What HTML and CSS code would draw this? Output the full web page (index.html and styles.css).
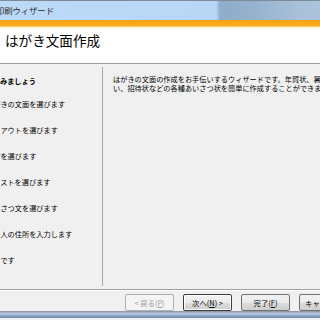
FILE: index.html
```html
<!DOCTYPE html>
<html lang="ja">
<head>
<meta charset="UTF-8">
<title>印刷ウィザード</title>
<link rel="stylesheet" href="styles.css">
</head>
<body>
<div class="window">
  <div class="titlebar"><span class="caption">印刷ウィザード</span></div>
  <div class="accent"></div>
  <div class="header"><h1>はがき文面作成</h1></div>

  <div class="content">
    <div class="steps">
      <div class="steps-title">はがきを作ってみましょう</div>
      <div class="step">はがきの文面を選びます</div>
      <div class="step">レイアウトを選びます</div>
      <div class="step">文字を選びます</div>
      <div class="step">イラストを選びます</div>
      <div class="step">あいさつ文を選びます</div>
      <div class="step">差出人の住所を入力します</div>
      <div class="step">完了です</div>
    </div>
    <div class="pane">
      <p class="intro">はがきの文面の作成をお手伝いするウィザードです。年賀状、暑中見舞<br>い、招待状などの各種あいさつ状を簡単に作成することができます。</p>
    </div>
  </div>

  <div class="footer">
    <button class="btn" disabled>&lt; 戻る(<u>P</u>)</button>
    <button class="btn default">次へ(<u>N</u>) &gt;</button>
    <button class="btn">完了(<u>F</u>)</button>
    <button class="btn">キャンセル</button>
  </div>
  <div class="frame-bottom"></div>
</div>
</body>
</html>
```

FILE: styles.css
```css
*{box-sizing:border-box; margin:0; padding:0;}
html,body{ width:320px; height:320px; overflow:hidden; background:#f0f0f0;}
body{ font-family:'Noto Sans CJK JP','Noto Sans',sans-serif; color:#000;}
.window{ width:380px; }

/* aero title bar */
.titlebar{
  height:20px; border-top:1px solid #7d8a99; overflow:hidden; white-space:nowrap;
  background:
    linear-gradient(90deg, #bcdaf8 0, #b8d7f6 216px, #8fadca 220px, #94b1cd 250px, #a9c1da 300px, #b4c9df 380px);
}
.caption{ display:block; margin-left:-4px; font-size:8.4px; line-height:18px; color:#2a2a2a; letter-spacing:-0.1px;}

.accent{ height:9px; background:linear-gradient(#f7a414, #fbad1e 6px, #fff0c8 7px, #fffbee 9px);}

.header{ height:35px; background:#fff; padding:3px 0 0 5px; border-bottom:1px solid #a0a0a0;}
.header h1{ font-size:13.6px; line-height:16px; font-weight:400; color:#000; letter-spacing:0;}

.content{ display:flex; height:226px; padding-top:3px; padding-bottom:3px; border-bottom:1px solid #a0a0a0; box-shadow:0 1px 0 #fff;}
.steps{ width:102px; overflow:hidden; white-space:nowrap; padding-top:4px; font-size:7.2px; color:#000;}
.steps-title{ font-weight:700; line-height:20px; margin-left:-50px;}
.step{ line-height:26px; margin-left:-14px;}

.pane{ flex:1; border-left:1px solid #a7a7a7; padding:8px 0 0 10px; white-space:nowrap;}
.intro{ font-size:7.2px; line-height:9px; color:#000;}

.footer{ height:21px; display:flex; gap:9px; padding:3px 0 0 125px; border-top:1px solid #fff;}
.btn{
  width:49px; height:17px; font-family:inherit; font-size:7.4px; color:#000;
  border:1px solid #707070; border-radius:2px;
  background:linear-gradient(#f2f2f2, #ebebeb 50%, #dddddd 51%, #cfcfcf);
}
.btn u{ text-decoration:underline;}
.btn:disabled{ color:#a0a0a0; border-color:#adb2b5; background:#f4f4f4;}
.btn.default{ border-color:#3c3c3c; box-shadow:inset 0 0 0 1px #fff;}

.frame-bottom{ height:7px; background:linear-gradient(#8f9aa6 0, #8f9aa6 1px, #b6cbe2 2px, #a6bdd8 4px, #7f9bbd 5px, #6f8db3 7px);}
```
